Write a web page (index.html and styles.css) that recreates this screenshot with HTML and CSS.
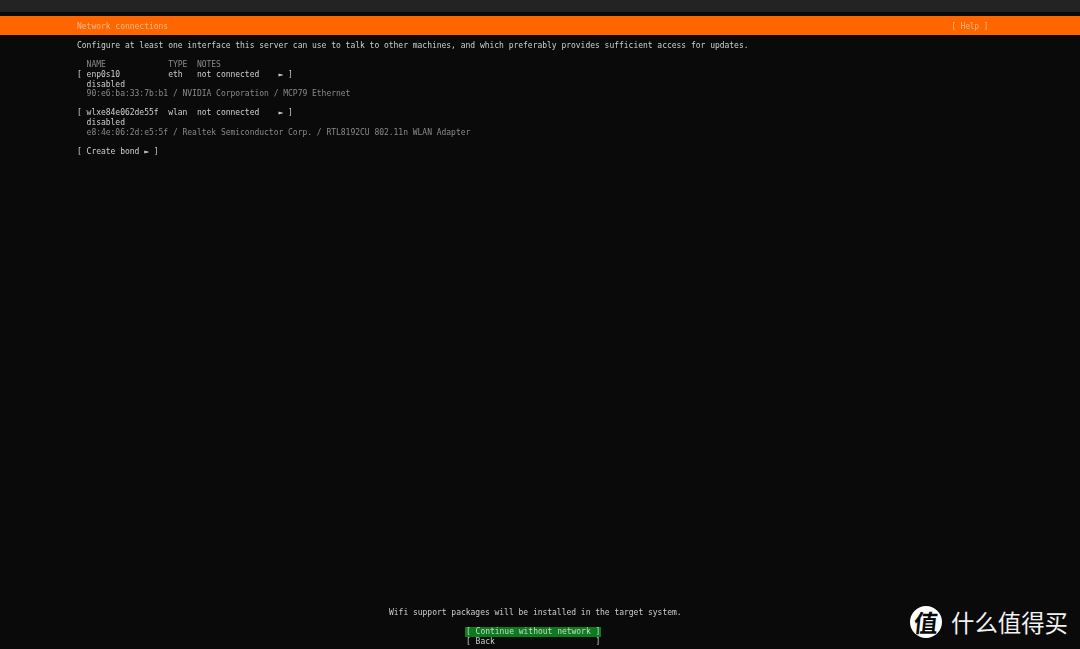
FILE: index.html
```html
<!DOCTYPE html>
<html lang="en">
<head>
<meta charset="utf-8">
<title>Network connections</title>
<link rel="stylesheet" href="styles.css">
</head>
<body>
<div class="screen">
  <div class="topbar"></div>
  <header class="header">
    <span class="title">Network connections</span>
    <span class="help">[ Help ]</span>
  </header>
  <main class="main">
    <p class="line">Configure at least one interface this server can use to talk to other machines, and which preferably provides sufficient access for updates.</p>
    <p class="line blank"></p>
    <p class="line dim">  NAME             TYPE  NOTES</p>
    <p class="line">[ enp0s10          eth   not connected    ► ]</p>
    <p class="line">  disabled</p>
    <p class="line dim">  90:e6:ba:33:7b:b1 / NVIDIA Corporation / MCP79 Ethernet</p>
    <p class="line blank"></p>
    <p class="line">[ wlxe84e062de55f  wlan  not connected    ► ]</p>
    <p class="line">  disabled</p>
    <p class="line dim">  e8:4e:06:2d:e5:5f / Realtek Semiconductor Corp. / RTL8192CU 802.11n WLAN Adapter</p>
    <p class="line blank"></p>
    <p class="line">[ Create bond ► ]</p>
  </main>
  <footer class="footer">
    <p class="line notice">Wifi support packages will be installed in the target system.</p>
    <p class="line blank"></p>
    <p class="line button primary">[ Continue without network ]</p>
    <p class="line button">[ Back                     ]</p>
  </footer>
</div>
<div class="logo">
  <span class="badge"><span class="badge-glyph">值</span></span>
  <span class="brand">什么值得买</span>
</div>
</body>
</html>
```
FILE: styles.css
```css
html, body {
  margin: 0;
  padding: 0;
  width: 1080px;
  height: 649px;
  overflow: hidden;
  background: #0a0a0a;
}
.screen {
  display: flex;
  flex-direction: column;
  height: 649px;
  font-family: "DejaVu Sans Mono", monospace;
  font-size: 8px;
  letter-spacing: -0.02px;
  color: #cfcfcf;
  filter: blur(0.45px);
}
.topbar {
  height: 12px;
  background: #232323;
  margin-bottom: 4px;
  flex: none;
}
.header {
  flex: none;
  height: 19px;
  box-sizing: border-box;
  padding: 2px 92px 0 77px;
  background: #ff6600;
  display: flex;
  justify-content: space-between;
  align-items: center;
  color: #f5b98c;
  white-space: pre;
}
.help {
  letter-spacing: -0.25px;
}
.main {
  flex: 1;
  padding: 6px 0 0 77px;
}
.line {
  margin: 0;
  height: 9.64px;
  line-height: 9.64px;
  white-space: pre;
}
.dim {
  color: #8a8a8a;
}
.footer {
  flex: none;
  padding-bottom: 2.5px;
}
.notice {
  margin-left: 389px;
}
.button {
  margin-left: 466px;
  width: 135px;
}
.primary {
  background: #0e7a20;
  color: #c4dcc4;
  margin-left: 465px;
  padding-left: 1px;
}
.logo {
  position: absolute;
  left: 910px;
  top: 606px;
  display: flex;
  align-items: center;
  gap: 9px;
  color: #f2f2f2;
  font-family: "Noto Sans CJK SC", sans-serif;
}
.badge {
  width: 32px;
  height: 32px;
  border-radius: 50%;
  background: #fff;
  color: #0a0a0a;
  display: flex;
  align-items: center;
  justify-content: center;
  font-size: 24px;
  font-weight: 700;
  line-height: 1;
}
.badge-glyph {
  display: block;
  transform: skewX(-6deg);
}
.brand {
  font-size: 23.4px;
  line-height: 32px;
}
```
